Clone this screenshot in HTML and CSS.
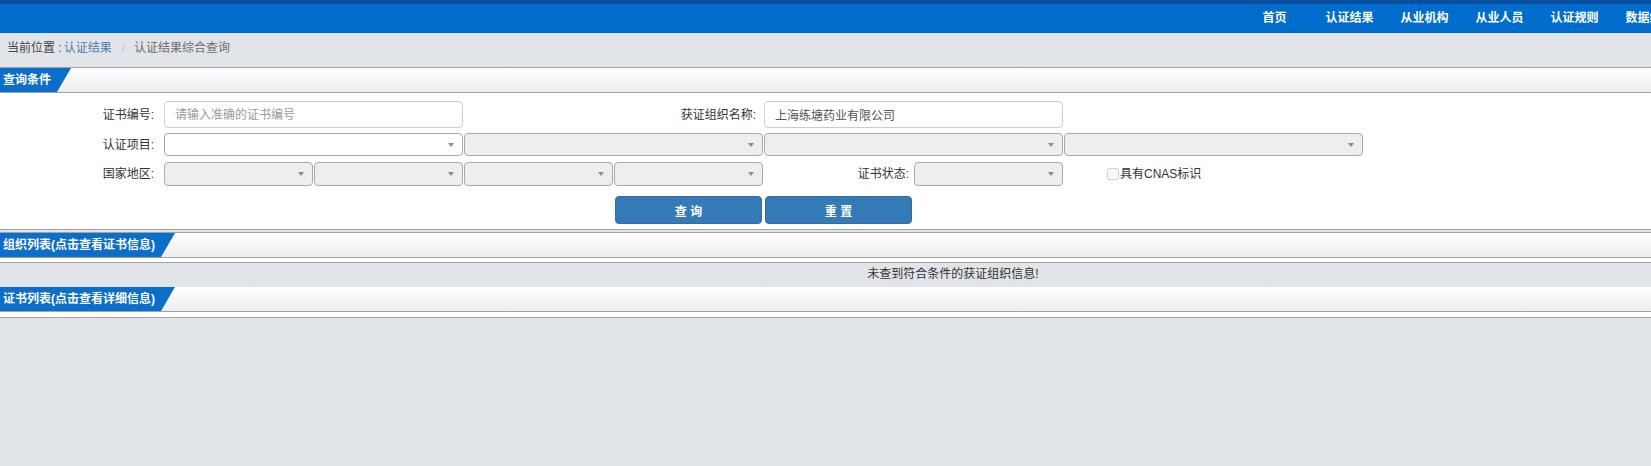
FILE: index.html
```html
<!DOCTYPE html>
<html lang="zh-CN">

<head>
    <meta charset="UTF-8">
    <meta name="viewport" content="width=device-width, initial-scale=1.0">
    <title>认证结果综合查询</title>
    <link rel="stylesheet" href="styles.css">
</head>

<body>
    <div class="page">
        <div class="top-strip"></div>
        <header class="nav">
            <ul class="nav-list">
                <li>首页</li>
                <li>认证结果</li>
                <li>从业机构</li>
                <li>从业人员</li>
                <li>认证规则</li>
                <li>数据统计</li>
            </ul>
        </header>

        <div class="crumb">
            <span class="crumb-label">当前位置 :</span>
            <a class="crumb-link" href="#">认证结果</a>
            <span class="crumb-sep">/</span>
            <span class="crumb-current">认证结果综合查询</span>
        </div>

        <!-- 查询条件 -->
        <section class="panel panel-query">
            <div class="panel-head"><span class="panel-tab">查询条件</span></div>
            <form class="query-form">
                <div class="f-row f-row-1">
                    <label class="f-label">证书编号:</label>
                    <input class="f-input span-2" type="text" placeholder="请输入准确的证书编号">
                    <label class="f-label-inline span-2">获证组织名称:</label>
                    <input class="f-input span-2" type="text" value="上海练塘药业有限公司">
                </div>

                <div class="f-row f-row-2">
                    <label class="f-label">认证项目:</label>
                    <span class="combo combo-active span-2"></span>
                    <span class="combo span-2"></span>
                    <span class="combo span-2"></span>
                    <span class="combo span-2"></span>
                </div>

                <div class="f-row f-row-3">
                    <label class="f-label">国家地区:</label>
                    <span class="combo"></span>
                    <span class="combo"></span>
                    <span class="combo"></span>
                    <span class="combo"></span>
                    <label class="f-label-inline f-label-status">证书状态:</label>
                    <span class="combo"></span>
                    <label class="f-check"><input type="checkbox" disabled>具有CNAS标识</label>
                </div>

                <div class="f-row f-row-btns">
                    <span></span><span></span><span></span><span></span>
                    <button type="button" class="btn">查 询</button>
                    <button type="button" class="btn">重 置</button>
                </div>
            </form>
        </section>

        <!-- 组织列表 -->
        <section class="panel panel-list">
            <div class="panel-head"><span class="panel-tab">组织列表(点击查看证书信息)</span></div>
            <div class="panel-body"></div>
            <div class="empty-msg">未查到符合条件的获证组织信息!</div>
        </section>

        <!-- 证书列表 -->
        <section class="panel panel-cert">
            <div class="panel-head"><span class="panel-tab">证书列表(点击查看详细信息)</span></div>
            <div class="panel-body"></div>
        </section>
    </div>
</body>

</html>
```

FILE: styles.css
```css
* {
    margin: 0;
    padding: 0;
    box-sizing: border-box;
}

body {
    overflow-x: hidden;
    background: #e1e5e9;
    font-size: 12px;
    line-height: 1;
    color: #333;
    font-family: "Liberation Sans", "Noto Sans CJK SC", sans-serif;
}

.page {
    width: 1906px;
}

.top-strip {
    height: 4px;
    background: #0a4e9f;
}

.nav {
    height: 29px;
    background: #006dcc;
}

.nav-list {
    display: flex;
    justify-content: flex-end;
    padding-right: 219px;
    list-style: none;
}

.nav-list li {
    width: 75px;
    line-height: 29px;
    text-align: center;
    color: #fff;
    font-weight: bold;
}

.crumb {
    height: 34px;
    display: flex;
    align-items: center;
    padding: 0 0 4px 7px;
    color: #444;
}

.crumb-link {
    margin-left: 2px;
    color: #4f7fb6;
    text-decoration: none;
}

.crumb-sep {
    margin: 0 9px 0 10px;
    color: #c5c5c5;
}

.crumb-current {
    color: #6f6f6f;
}

.panel {
    background: #fff;
    border-top: 1px solid #a2a2a2;
    border-bottom: 1px solid #a2a2a2;
}

.panel-head {
    height: 25px;
    border-bottom: 1px solid #a2a2a2;
    background: linear-gradient(#ffffff, #ededed);
}

.panel-tab {
    display: inline-block;
    height: 24px;
    line-height: 24px;
    padding: 0 20px 0 3px;
    background: #0b6ecb;
    color: #fff;
    font-weight: bold;
    clip-path: polygon(0 0, 100% 0, calc(100% - 14px) 100%, 0 100%);
}

/* query form */
.query-form {
    padding: 8px 0 5px;
}

.f-row {
    display: grid;
    grid-template-columns: 164px repeat(8, 150px);
    align-items: center;
}

.f-row-1 {
    height: 27px;
}

.f-row-2 {
    height: 23px;
    margin-top: 5px;
}

.f-row-3 {
    height: 24px;
    margin-top: 6px;
}

.f-row-btns {
    height: 28px;
    margin-top: 10px;
}

.span-2 {
    grid-column: span 2;
}

.f-label {
    text-align: right;
    padding-right: 10px;
    color: #333;
}

.f-label-inline {
    text-align: right;
    padding-right: 8px;
}

.f-label-status {
    padding-right: 5px;
}

.f-input {
    width: calc(100% - 1px);
    height: 27px;
    border: 1px solid #ccc;
    border-radius: 4px;
    padding: 0 10px;
    font-size: 12px;
    font-family: inherit;
    color: #555;
}

.f-input::placeholder {
    color: #9a9a9a;
}

.combo {
    position: relative;
    width: calc(100% - 1px);
    height: 24px;
    border: 1px solid #aaa;
    border-radius: 4px;
    background: #eee;
}

.f-row-2 .combo {
    height: 23px;
}

.combo-active {
    background: #fff;
}

.combo::after {
    content: '';
    position: absolute;
    right: 8px;
    top: 9px;
    border-top: 4px solid #8e8e8e;
    border-left: 3px solid transparent;
    border-right: 3px solid transparent;
}

.f-check {
    display: flex;
    align-items: center;
    padding-left: 43px;
    color: #333;
    white-space: nowrap;
}

.f-check input {
    width: 12px;
    height: 12px;
    margin: 0 1px 0 0;
}

.btn {
    width: 147px;
    height: 28px;
    margin-left: 1px;
    border: 1px solid #2e6da4;
    border-radius: 4px;
    background: #337ab7;
    color: #fff;
    font-size: 12px;
    font-weight: bold;
    font-family: inherit;
}

/* lists */
.panel-list {
    margin-top: 2px;
    border-bottom: 0;
}

.panel-body {
    height: 4px;
}

.empty-msg {
    height: 25px;
    line-height: 23px;
    text-align: center;
    background: #e1e5e9;
    border-top: 1px solid #a2a2a2;
    color: #333;
}

.panel-cert {
    border-top: 0;
}

.panel-cert .panel-body {
    height: 5px;
}
```
